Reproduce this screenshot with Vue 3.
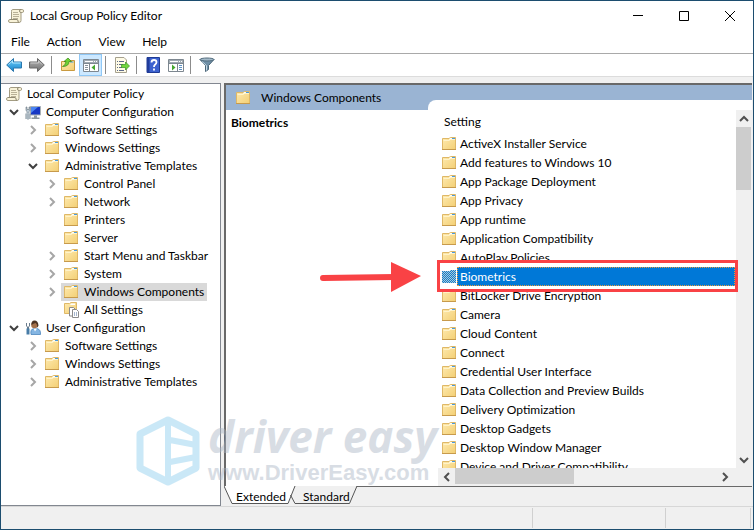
<script setup>
import { ref } from 'vue'

const menus = ['File', 'Action', 'View', 'Help']

const tools = [
  { id: 'back', label: 'Back' },
  { id: 'forward', label: 'Forward' },
  { id: 'sep1' },
  { id: 'up', label: 'Up one level' },
  { id: 'tree', label: 'Show or hide console tree', active: true },
  { id: 'sep2' },
  { id: 'export', label: 'Export list' },
  { id: 'sep3' },
  { id: 'help', label: 'Help' },
  { id: 'pane', label: 'Show or hide action pane' },
  { id: 'sep4' },
  { id: 'filter', label: 'Filter' },
]

const nodes = [
  { text: 'Local Computer Policy', level: 0, icon: 'scroll' },
  { text: 'Computer Configuration', level: 1, icon: 'computer', arrow: 'open' },
  { text: 'Software Settings', level: 2, icon: 'folder', arrow: 'closed' },
  { text: 'Windows Settings', level: 2, icon: 'folder', arrow: 'closed' },
  { text: 'Administrative Templates', level: 2, icon: 'folder', arrow: 'open' },
  { text: 'Control Panel', level: 3, icon: 'folder', arrow: 'closed' },
  { text: 'Network', level: 3, icon: 'folder', arrow: 'closed' },
  { text: 'Printers', level: 3, icon: 'folder' },
  { text: 'Server', level: 3, icon: 'folder' },
  { text: 'Start Menu and Taskbar', level: 3, icon: 'folder', arrow: 'closed' },
  { text: 'System', level: 3, icon: 'folder', arrow: 'closed' },
  { text: 'Windows Components', level: 3, icon: 'folder', arrow: 'closed', current: true },
  { text: 'All Settings', level: 3, icon: 'all' },
  { text: 'User Configuration', level: 1, icon: 'user', arrow: 'open' },
  { text: 'Software Settings', level: 2, icon: 'folder', arrow: 'closed' },
  { text: 'Windows Settings', level: 2, icon: 'folder', arrow: 'closed' },
  { text: 'Administrative Templates', level: 2, icon: 'folder', arrow: 'closed' },
]

const settings = [
  'ActiveX Installer Service',
  'Add features to Windows 10',
  'App Package Deployment',
  'App Privacy',
  'App runtime',
  'Application Compatibility',
  'AutoPlay Policies',
  'Biometrics',
  'BitLocker Drive Encryption',
  'Camera',
  'Cloud Content',
  'Connect',
  'Credential User Interface',
  'Data Collection and Preview Builds',
  'Delivery Optimization',
  'Desktop Gadgets',
  'Desktop Window Manager',
  'Device and Driver Compatibility',
]
const selected = ref('Biometrics')
</script>

<template>
  <div class="window">
    <svg class="defs" width="0" height="0" aria-hidden="true">
      <defs>
        <linearGradient id="gold" x1="0" y1="0" x2="1" y2="1">
          <stop offset="0" stop-color="#feeab0" />
          <stop offset="1" stop-color="#f3cf74" />
        </linearGradient>
        <linearGradient id="blue" x1="0" y1="0" x2="0" y2="1">
          <stop offset="0" stop-color="#6fd0fb" />
          <stop offset="1" stop-color="#1583cc" />
        </linearGradient>
        <linearGradient id="steel" x1="0" y1="0" x2="0" y2="1">
          <stop offset="0" stop-color="#b5b5b5" />
          <stop offset="1" stop-color="#707070" />
        </linearGradient>
        <pattern id="hatch" width="2" height="2" patternUnits="userSpaceOnUse">
          <rect width="2" height="2" fill="#1479cf" />
          <rect width="1" height="1" fill="#a9cfd6" />
          <rect x="1" y="1" width="1" height="1" fill="#a9cfd6" />
        </pattern>
        <symbol id="i-folder" viewBox="0 0 16 16">
          <path d="M1.500 2.500h6.500l1.500-1h5v12h-13z" fill="url(#gold)" stroke="#dfb867" />
          <path d="M9 2h5v2h-6z" fill="#fffdf2" />
          <path d="M11 2h3v1h-3z" fill="#4a9be0" />
          <path d="M2.500 4.500h6l1-1h4.500" fill="none" stroke="#fff3c9" />
          <path d="M1 13.500h14" stroke="#c79a4c" />
        </symbol>
        <symbol id="i-scroll" viewBox="0 0 16 16">
          <path d="M4.500 1.500h10q1 0 1 1.500t-1 1.500h-1.500v8q0 2-2 2h-9q-1.500 0-1.500-1.500t1.500-1.500h1.500v-8q0-2 1-2z" fill="#f8f2d8" stroke="#a39c82" />
          <path d="M13 4.500q-1.500 0-1.500-1.500t1.500-1.500M2 11.500h7q1 0 1 1.500t1 1.500" fill="none" stroke="#918a72" />
          <path d="M5 4.500h5M5 6.500h6M5 8.500h6M5 10.500h5" stroke="#b9b197" />
        </symbol>
        <symbol id="i-computer" viewBox="0 0 16 16">
          <path d="M5.500 2.500h10v8.500h-10z" fill="#1738c4" stroke="#a8b0b6" />
          <path d="M6 3h7l-7 6z" fill="#4b85f3" />
          <path d="M9 11.500h3v2h2.500v1.500h-8v-1.500h2.500z" fill="#8c979f" />
          <path d="M1 3v3q0 1 1 1.500v7.500h2v-7.500q1-.5 1-1.500v-3h-1v2.500h-2v-2.500z" fill="#bccbd6" stroke="#64727c" stroke-width=".6" />
          <path d="M0.500 9.500h5v5.500h-5z" fill="#7d8b95" />
          <path d="M2 9v6M4 9v6" stroke="#d7e2ea" />
        </symbol>
        <symbol id="i-user" viewBox="0 0 16 16">
          <path d="M6 14.500q-1-5.500 3-6h3q4 1 3.500 6z" fill="#84b5e2" stroke="#3c7ab4" stroke-width=".7" />
          <path d="M8.500 8.500l1.500 3 2-3z" fill="#fff" />
          <circle cx="9.500" cy="5" r="3.300" fill="#a5714a" />
          <path d="M6.500 5q-.5-4.500 3-4.500t4 5q-.5 1.500-1.500 2 .5-3.500-1.500-4.500-2 .5-4 2z" fill="#4d3423" />
          <path d="M1.500 3v3l1 1v7M4.500 3v3l-1 1v7" fill="none" stroke="#6a7c8d" />
          <path d="M1.500 8.500h3v6h-3z" fill="#477ca7" />
        </symbol>
        <symbol id="i-all" viewBox="0 0 16 16">
          <path d="M1.500 1.500h5l1.500-1h5.500v11h-12z" fill="url(#gold)" stroke="#dfb867" />
          <path d="M8 1.500h4v1.500h-5z" fill="#fff" />
          <path d="M6.500 5.500h4l1.500 1.500v7h-5.500z" fill="#fff" stroke="#8b8b8b" />
          <path d="M9.500 7.500h4l2 2v6h-6z" fill="#fff" stroke="#8b8b8b" />
          <path d="M11 11h1M13 11h1M11 13h1M13 13h1" stroke="#4c6f9d" />
        </symbol>
        <symbol id="i-hatched" viewBox="0 0 16 16">
          <path d="M1 2h7l1-1h6v13h-14z" fill="url(#hatch)" shape-rendering="crispEdges" />
        </symbol>
        <symbol id="i-back" viewBox="0 0 16 16">
          <path d="M.7 8l6.800-6.500v3.500h8v6h-8v3.500z" fill="url(#blue)" stroke="#2a77ad" />
          <path d="M2.500 7.500l4-3.500v2h8" fill="none" stroke="#aee5ff" />
        </symbol>
        <symbol id="i-forward" viewBox="0 0 16 16">
          <path d="M15.300 8l-6.800-6.500v3.500h-8v6h8v3.500z" fill="url(#steel)" stroke="#696969" />
          <path d="M1.500 6h8v-2l3.500 3.500" fill="none" stroke="#cbcbcb" />
        </symbol>
        <symbol id="i-up" viewBox="0 0 16 16">
          <path d="M1.500 4.500h6l1.500-1h5.500v10h-13z" fill="url(#gold)" stroke="#c99a3f" />
          <path d="M10 5h3.500" stroke="#4a9be0" />
          <path d="M2.500 9.500q3-1 3.500-5h-2l4-3.500 3.500 3.500h-2.500q0 5-6.500 5z" fill="#6fd132" stroke="#348817" stroke-width=".7" />
        </symbol>
        <symbol id="i-tree" viewBox="0 0 16 16">
          <path d="M.5 2.500h15v12h-15z" fill="#fff" stroke="#7d8790" />
          <path d="M1 3h14v3h-14z" fill="#a1abb3" />
          <path d="M2 4.500h8M11 4.500h1M13 4.500h1" stroke="#fff" />
          <path d="M1 6.500h14M6.500 7v7" stroke="#7d8790" />
          <path d="M2 8.500h3M2 10.500h3M2 12.500h3" stroke="#8a949c" />
          <path d="M12 7.500v6l-3.500-3z" fill="#44a72e" />
        </symbol>
        <symbol id="i-pane" viewBox="0 0 16 16">
          <path d="M.5 2.500h15v12h-15z" fill="#fff" stroke="#7d8790" />
          <path d="M1 3h14v3h-14z" fill="#a1abb3" />
          <path d="M2 4.500h8M11 4.500h1M13 4.500h1" stroke="#fff" />
          <path d="M1 6.500h14M9.500 7v7" stroke="#7d8790" />
          <path d="M11 8.500h3M11 10.500h3M11 12.500h3" stroke="#5d92c4" />
          <path d="M4 7.500v6l3.500-3z" fill="#44a72e" />
        </symbol>
        <symbol id="i-export" viewBox="0 0 16 16">
          <path d="M1.500 .5h8.500l2.500 2.500v12.500h-11z" fill="#fffbe6" stroke="#a5a08e" />
          <path d="M3 4.500h1M5 4.500h5M3 7.500h1M5 7.500h4M3 10.500h1M5 10.500h3M3 13.500h1M5 13.500h5" stroke="#5d6a8a" />
          <path d="M7.500 7.500h4v-2.500l4 4-4 4v-2.500h-4z" fill="#72d63d" stroke="#379422" stroke-width=".7" />
        </symbol>
        <symbol id="i-help" viewBox="0 0 16 16">
          <path d="M2 .5h12.500v15h-12.500z" fill="#3c62cf" stroke="#1f3b94" />
          <path d="M2 1h2.500v14.500h-2.500z" fill="#203c9b" />
          <path d="M6.500 5.500q0-2.500 2.500-2.500t2.500 2.200q0 1.300-1.300 2.200t-1.200 2.600M9 11.500v2" fill="none" stroke="#fff" stroke-width="1.800" />
        </symbol>
        <symbol id="i-filter" viewBox="0 0 16 16">
          <path d="M1 2.500l5.500 6v6l3-2v-4l5.500-6z" fill="#6f8fa6" stroke="#4b6678" />
          <path d="M3 4.500l4.500 4v5" fill="none" stroke="#c6d9e5" />
          <ellipse cx="8" cy="2.500" rx="7" ry="1.500" fill="#a3bac9" stroke="#526c7e" />
        </symbol>
      </defs>
    </svg>

    <header class="titlebar">
      <svg class="icon"><use href="#i-scroll" /></svg>
      <h1>Local Group Policy Editor</h1>
      <div class="controls">
        <button aria-label="Minimize"><svg viewBox="0 0 10 10"><path d="M0 4.500h10" /></svg></button>
        <button aria-label="Maximize"><svg viewBox="0 0 10 10"><path d="M.5 .5h9v9h-9z" /></svg></button>
        <button aria-label="Close"><svg viewBox="0 0 10 10"><path d="M0 0l10 10M10 0l-10 10" /></svg></button>
      </div>
    </header>

    <nav class="menubar">
      <button v-for="m in menus" :key="m">{{ m }}</button>
    </nav>

    <div class="toolbar">
      <template v-for="t in tools" :key="t.id">
        <button v-if="t.label" :class="{ active: t.active }" :aria-label="t.label">
          <svg class="icon"><use :href="'#i-' + t.id" /></svg>
        </button>
        <span v-else class="sep"></span>
      </template>
    </div>

    <main class="workspace">
      <ul class="tree">
        <li v-for="(n, i) in nodes" :key="i" :class="'level' + n.level">
          <span v-if="n.level" class="twisty">
            <svg v-if="n.arrow === 'open'" class="open" viewBox="0 0 10 10"><path d="M1 3l4 4 4-4" /></svg>
            <svg v-else-if="n.arrow" class="closed" viewBox="0 0 10 10"><path d="M3 1l4 4-4 4" /></svg>
          </span>
          <span class="node" :class="{ current: n.current }">
            <svg class="icon"><use :href="'#i-' + n.icon" /></svg>
            {{ n.text }}
          </span>
        </li>
      </ul>

      <section class="details">
        <div class="panel">
          <div class="band">
            <div class="band-title">
              <svg class="icon"><use href="#i-folder" /></svg>
              <span>Windows Components</span>
            </div>
            <div class="band-cap"></div>
          </div>
          <div class="content">
            <h2>{{ selected }}</h2>
            <div class="listing">
              <div class="list-area">
                <div class="list">
                  <div class="column">Setting</div>
                  <ul>
                    <li v-for="s in settings" :key="s" :class="{ selected: s === selected }" @click="selected = s">
                      <svg class="icon"><use :href="s === selected ? '#i-hatched' : '#i-folder'" /></svg>
                      <span>{{ s }}</span>
                    </li>
                  </ul>
                </div>
                <div class="vscroll">
                  <button aria-label="Scroll up"><svg viewBox="0 0 10 10"><path d="M1 7l4-4 4 4" /></svg></button>
                  <div class="vthumb"></div>
                  <button aria-label="Scroll down"><svg viewBox="0 0 10 10"><path d="M1 3l4 4 4-4" /></svg></button>
                </div>
              </div>
              <div class="hscroll">
                <button aria-label="Scroll left"><svg viewBox="0 0 10 10"><path d="M7 1l-4 4 4 4" /></svg></button>
                <div class="hthumb"></div>
                <button aria-label="Scroll right"><svg viewBox="0 0 10 10"><path d="M3 1l4 4-4 4" /></svg></button>
              </div>
              <div class="callout"></div>
              <svg class="pointer" viewBox="0 0 102 32">
                <path d="M3 17L75 16" stroke="#f94245" stroke-width="6" stroke-linecap="round" />
                <path d="M71 1l30 14-30 16z" fill="#f94245" />
              </svg>
            </div>
          </div>
        </div>
        <div class="tabs">
          <svg class="tab-shapes" viewBox="0 0 134 19">
            <path d="M64 18h62l7-18h-63l-5 8z" fill="#f0f0f0" />
            <path d="M0 0l8 18h56l7-18z" fill="#fff" />
            <path d="M0 0l8 17.500h56l7-17.500M66.500 9l4.500 8.500h54.500l7.500-17.500" fill="none" stroke="#555" />
          </svg>
          <button>Extended</button>
          <button>Standard</button>
        </div>
      </section>
    </main>

    <footer class="status"><span></span><span></span><span></span></footer>

    <div class="watermark">
      <svg viewBox="0 0 64 70">
        <g fill="none" stroke="#8ccdee" stroke-width="7" stroke-linejoin="round">
          <path d="M32 4L60 18v34L32 66 4 52V18z" />
          <path d="M32 4v62M34 24l26 5M34 46l26-5" stroke-width="6" />
        </g>
      </svg>
      <div class="brand">
        <strong>driver easy</strong>
        <span>www.DriverEasy.com</span>
      </div>
    </div>
  </div>
</template>

<style>
body {
  margin: 0;
}
</style>

<style scoped>
.window {
  position: relative;
  box-sizing: border-box;
  height: 100vh;
  min-height: 320px;
  display: flex;
  flex-direction: column;
  border: 1px solid #1c4d6f;
  background: #fff;
  color: #000;
  font: 12px/18px Lato, "Open Sans", sans-serif;
  overflow: hidden;
}
.defs {
  position: absolute;
}
.icon {
  width: 16px;
  height: 16px;
  flex: none;
}
button {
  border: 0;
  padding: 0;
  background: none;
  font: inherit;
  color: inherit;
}
ul {
  list-style: none;
  margin: 0;
  padding: 0;
}
.titlebar {
  display: flex;
  align-items: center;
  height: 29px;
  padding-left: 7px;
}
h1 {
  flex: 1;
  margin: 0 0 0 6px;
  font-size: 12px;
  font-weight: 400;
}
.controls {
  display: flex;
}
.controls button {
  width: 46px;
  height: 28px;
  display: grid;
  place-items: center;
}
.controls svg {
  width: 10px;
  height: 10px;
  fill: none;
  stroke: #000;
}
.menubar {
  display: flex;
  gap: 17px;
  height: 23px;
  padding-left: 10px;
  border-bottom: 1px solid #a9a9a9;
}
.toolbar {
  display: flex;
  align-items: center;
  height: 22px;
  padding-left: 1px;
  border-bottom: 1px solid #dcdcdc;
}
.toolbar button {
  box-sizing: border-box;
  width: 23px;
  height: 22px;
  display: grid;
  place-items: center;
}
.toolbar .active {
  border: 1px solid #90c8f6;
  background: #cce8ff;
}
.sep {
  width: 1px;
  height: 18px;
  margin: 0 4px 0 3px;
  background: #8c8c8c;
}
.workspace {
  flex: 1;
  min-height: 0;
  display: flex;
  gap: 3px;
  padding-top: 6px;
  background: #f0f0f0;
}
.tree {
  flex: 0 0 220px;
  box-sizing: border-box;
  padding-top: 1px;
  border: 1px solid #828790;
  border-left: 0;
  background: #fff;
  overflow: hidden;
}
.tree li {
  display: flex;
  height: 18px;
  padding-left: 3px;
  white-space: nowrap;
}
.tree .level2 {
  padding-left: 22px;
}
.tree .level3 {
  padding-left: 41px;
}
.twisty {
  flex: none;
  display: grid;
  place-items: center;
  width: 19px;
}
.twisty svg {
  width: 10px;
  height: 10px;
  fill: none;
  stroke: #a6a6a6;
  stroke-width: 2;
}
.twisty .open {
  stroke: #404040;
}
.node {
  display: flex;
  align-items: center;
  gap: 5px;
  padding: 0 3px 0 2px;
}
.node.current {
  background: #d9d9d9;
}
.details {
  flex: 1;
  min-width: 0;
  display: flex;
  flex-direction: column;
}
.panel {
  flex: 1;
  min-height: 0;
  display: flex;
  flex-direction: column;
  margin-right: 1px;
  border: 2px solid #696969;
  border-width: 2px 0 1px 2px;
  background: #fff;
}
.band {
  display: flex;
  height: 25px;
  background: #9ab4d3;
}
.band-title {
  flex: 0 0 202px;
  box-sizing: border-box;
  display: flex;
  align-items: center;
  gap: 10px;
  padding-left: 9px;
}
.band-cap {
  flex: 1;
  align-self: flex-end;
  height: 10px;
  border-radius: 8px 0 0 0;
  background: #fff;
}
.content {
  flex: 1;
  min-height: 0;
  display: flex;
}
h2 {
  flex: 0 0 202px;
  box-sizing: border-box;
  margin: 0;
  padding: 4px 5px;
  font-size: 12px;
  line-height: 18px;
}
.listing {
  position: relative;
  flex: 1;
  min-width: 0;
  display: flex;
  flex-direction: column;
  padding-left: 10px;
}
.list-area {
  flex: 1;
  min-height: 0;
  display: flex;
}
.list {
  flex: 1;
  min-width: 0;
  overflow: hidden;
}
.column {
  padding: 3px 6px;
}
.list li {
  display: flex;
  align-items: center;
  height: 19px;
  padding: 0 1px 0 3px;
  white-space: nowrap;
}
.list li span {
  flex: 1;
  box-sizing: border-box;
  padding-left: 3px;
}
.list li.selected {
  position: relative;
  z-index: 2;
}
.list .selected span {
  border: 1px dotted #e8983c;
  padding-left: 2px;
  background: #0078d7;
  color: #fff;
  line-height: 17px;
}
.vscroll {
  flex: 0 0 16px;
  display: flex;
  flex-direction: column;
  background: #f0f0f0;
}
.vscroll button,
.hscroll button {
  display: grid;
  place-items: center;
  width: 17px;
  height: 17px;
}
.vscroll button {
  width: 15px;
}
.vscroll svg,
.hscroll svg {
  width: 10px;
  height: 10px;
  fill: none;
  stroke: #505050;
  stroke-width: 2;
}
.vthumb {
  height: 63px;
  margin: 0 1px 0 0;
  background: #cdcdcd;
}
.vscroll button:last-child {
  margin-top: auto;
}
.hscroll {
  display: flex;
  height: 18px;
  padding-right: 19px;
  background: #f0f0f0;
}
.hthumb {
  width: 119px;
  height: 16px;
  background: #cdcdcd;
}
.hscroll button:last-child {
  margin-left: auto;
}
.callout {
  position: absolute;
  z-index: 1;
  box-sizing: border-box;
  left: 9px;
  right: 14px;
  top: 150px;
  height: 32px;
  border: 3px solid #f94245;
  background: #fff;
}
.pointer {
  position: absolute;
  left: -108px;
  top: 151px;
  width: 102px;
  height: 32px;
}
.tabs {
  position: relative;
  display: flex;
  gap: 17px;
  height: 19px;
  padding-left: 12px;
}
.tabs button {
  position: relative;
}
.tab-shapes {
  position: absolute;
  left: 0;
  top: -1px;
  width: 134px;
  height: 19px;
}
.status {
  display: flex;
  justify-content: flex-end;
  height: 22px;
  border-top: 1px solid #d7d7d7;
  background: #f0f0f0;
}
.status span {
  box-sizing: border-box;
  width: 133px;
  margin: 1px 0;
  border-right: 1px solid #d0d0d0;
}
.status span:last-child {
  width: 85px;
  margin-right: 2px;
}
.watermark {
  position: absolute;
  z-index: 3;
  left: 135px;
  top: 415px;
  display: flex;
  gap: 8px;
  opacity: 0.45;
  color: #a9b5c4;
  pointer-events: none;
}
.watermark svg {
  width: 64px;
  height: 70px;
}
.brand {
  display: flex;
  flex-direction: column;
  white-space: nowrap;
}
.brand strong {
  font: italic 700 44px/40px "Open Sans", sans-serif;
}
.brand span {
  margin-top: 6px;
  font: bold 22px/22px "Liberation Sans", sans-serif;
}
</style>
